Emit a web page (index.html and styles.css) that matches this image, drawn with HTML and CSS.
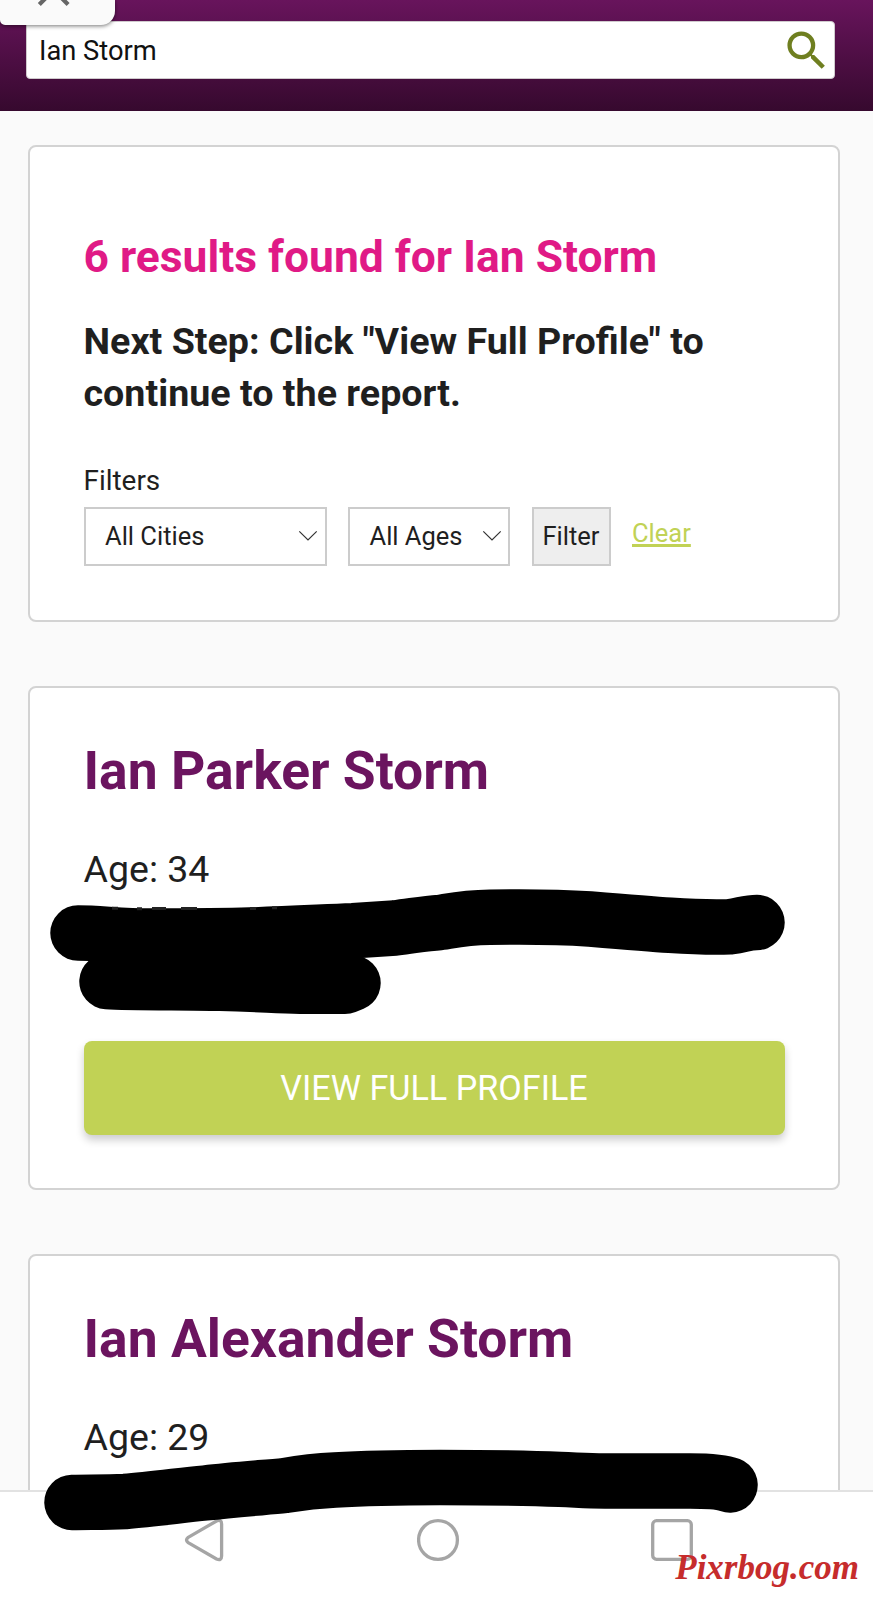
FILE: index.html
```
<!DOCTYPE html>
<html lang="en">
<head>
<meta charset="utf-8">
<title>Results for Ian Storm</title>
<link rel="stylesheet" href="styles.css">
</head>
<body>
<div class="screen">
  <header class="header">
    <div class="search">
      <span class="search-text">Ian Storm</span>
      <svg class="search-icon" viewBox="0 0 24 24"><path d="M15.5 14h-.79l-.28-.27A6.471 6.471 0 0 0 16 9.5 6.5 6.5 0 1 0 9.5 16c1.61 0 3.09-.59 4.23-1.57l.27.28v.79l5 4.99L20.49 19l-4.99-5zm-6 0C7.01 14 5 11.99 5 9.5S7.01 5 9.5 5 14 7.01 14 9.5 11.99 14 9.5 14z"/></svg>
    </div>
    <div class="pull-tab"><svg viewBox="0 0 116 25"><path d="M39.3 4.5 53.7-9.9 68.1 4.5"/></svg></div>
  </header>
  <main class="content">
    <section class="card summary">
      <h1 class="found">6 results found for Ian Storm</h1>
      <h2 class="next">Next Step: Click "View Full Profile" to continue to the report.</h2>
      <div class="filters-label">Filters</div>
      <div class="filters">
        <div class="select cities"><span>All Cities</span><svg class="chevron" viewBox="0 0 20 12"><path d="M1.3 1.3 10 10l8.7-8.7"/></svg></div>
        <div class="select ages"><span>All Ages</span><svg class="chevron" viewBox="0 0 20 12"><path d="M1.3 1.3 10 10l8.7-8.7"/></svg></div>
        <div class="filter-button">Filter</div>
        <a class="clear">Clear</a>
      </div>
    </section>
    <section class="card person">
      <h2 class="name">Ian Parker Storm</h2>
      <div class="age">Age: 34</div>
      <div class="address"></div>
      <div class="profile-button">VIEW FULL PROFILE</div>
    </section>
    <section class="card person">
      <h2 class="name">Ian Alexander Storm</h2>
      <div class="age">Age: 29</div>
    </section>
  </main>
  <nav class="nav">
    <svg class="nav-icon" viewBox="0 0 44 44"><path d="M4.2 19.4 32.5 3Q37.6 1 37.6 6V38Q37.6 43 32.5 41L4.2 24.6Q.8 22 4.2 19.4Z"/></svg>
    <svg class="nav-icon" viewBox="0 0 44 44"><circle cx="21" cy="22" r="19.4"/></svg>
    <svg class="nav-icon" viewBox="0 0 44 44"><rect x="2.7" y="2.7" width="38.6" height="38.6" rx="3.8"/></svg>
  </nav>
  <svg class="marker" viewBox="0 0 879 1600">
    <path d="M78 933C100 933 120 936 150 936S220 936 250 935C290 934 320 932 353 930.7L395 928C415 925.5 425 923.5 440 922.5C455 920 465 917.5 490 917.2C520 916.7 560 917 590 919C620 921.5 650 924 670 925.3S715 927.3 730 926.8C743 925 747 922.5 757 922.5"/>
    <path d="M107 981.5C130 983 180 982.5 220 983.3S275 986 300 986.3H345L353 983"/>
    <path d="M72 1502.4C90 1502 105 1502.5 125 1501.5C150 1499.5 180 1495.5 205 1493C235 1489.5 265 1487.5 285 1485.5C300 1483 315 1481 335 1480C365 1478 400 1477.4 440 1477.4S530 1478 560 1479.4 590 1481 605 1481H690C705 1481 722 1482 730 1485"/>
    <path class="flecks" d="M112 908.2h6M137 908.8h5M152 908.4h14M181 908.4h16M250 908.4h6M272 907.8h5"/>
  </svg>
  <div class="watermark">Pixrbog.com</div>
</div>
</body>
</html>
```
FILE: styles.css
```
* { box-sizing: border-box; }
body { margin: 0; background: #fff; font-family: Roboto, sans-serif; color: #1f1f1f; }
.screen { position: relative; width: 879px; height: 1600px; overflow: hidden; display: flex; flex-direction: column; }
.header { position: relative; flex: none; width: 873px; height: 111px; padding: 21px 38px 0 26px; background: linear-gradient(#68145c, #36092e); }
.search { display: flex; align-items: center; justify-content: space-between; height: 58px; padding: 1px 1.5px 0 12px; background: #fff; border: 1px solid #cfcacd; border-radius: 4px; }
.search-text { font-size: 27.3px; line-height: 32px; color: #111; }
.search-icon { width: 51.4px; height: 51.4px; fill: #6f7f20; }
.pull-tab { position: absolute; left: 0; top: 0; width: 114.5px; height: 25px; background: #fafafa; border-radius: 0 0 14px 5px; box-shadow: 0 1px 4px rgba(0,0,0,.55); }
.pull-tab svg { display: block; width: 116px; height: 25px; fill: none; stroke: #666; stroke-width: 4.2; }
.content { flex: none; width: 873px; height: 1379px; overflow: hidden; padding: 34px 33px 0 28px; background: #fafafa; display: flex; flex-direction: column; gap: 64px; }
.card { flex: none; background: #fff; border: 2px solid #d3d3d3; border-radius: 8px; padding: 0 53.5px; }
.summary { height: 477px; padding-top: 83px; }
.person { height: 504px; padding-top: 51px; }
.found { margin: 0; font-size: 44.4px; line-height: 54px; color: #e01a86; white-space: nowrap; }
.next { margin: 31px 0 0; font-size: 37.65px; line-height: 52px; }
.filters-label { margin-top: 46px; font-size: 27.9px; line-height: 32px; }
.filters { display: flex; gap: 21.5px; margin-top: 10px; font-size: 25.5px; line-height: 30px; }
.select { display: flex; align-items: center; justify-content: space-between; height: 59px; border: 2px solid #ccc; padding: 0 6.5px 2px 19.5px; }
.cities { width: 243px; }
.ages { width: 162px; }
.chevron { width: 20px; height: 12px; fill: none; stroke: #333; stroke-width: 1.2; }
.filter-button { display: flex; align-items: center; justify-content: center; width: 79px; height: 59px; padding-bottom: 2px; border: 2px solid #ccc; background: #eee; }
.clear { margin-top: 11px; color: #c1d255; text-decoration: underline; text-decoration-thickness: 2.5px; }
.name { margin: 0; font-size: 53.4px; line-height: 64px; color: #6b145f; }
.age { margin-top: 40px; font-size: 37.5px; line-height: 52px; }
.address { height: 104px; }
.profile-button { display: flex; align-items: center; justify-content: center; margin-top: 42px; height: 94px; background: #c1d255; border-radius: 8px; box-shadow: 0 5px 8px rgba(0,0,0,.2); color: #fff; font-size: 34.15px; }
.nav { flex: 1; display: flex; align-items: flex-start; gap: 189px; width: 873px; padding: 26px 0 0 184px; border-top: 2px solid #e2e2e2; }
.nav-icon { width: 44px; height: 44px; fill: none; stroke: #a5a5a5; stroke-width: 3.3; }
.marker { position: absolute; left: 0; top: 0; width: 879px; height: 1600px; fill: none; stroke: #000; stroke-width: 55.5; stroke-linecap: round; stroke-linejoin: round; pointer-events: none; }
.flecks { stroke: #222; stroke-width: 3; stroke-linecap: butt; }
.watermark { position: absolute; right: 20px; bottom: 12px; font: italic bold 35px/40px "Liberation Serif", serif; color: #c62c2c; }
```
